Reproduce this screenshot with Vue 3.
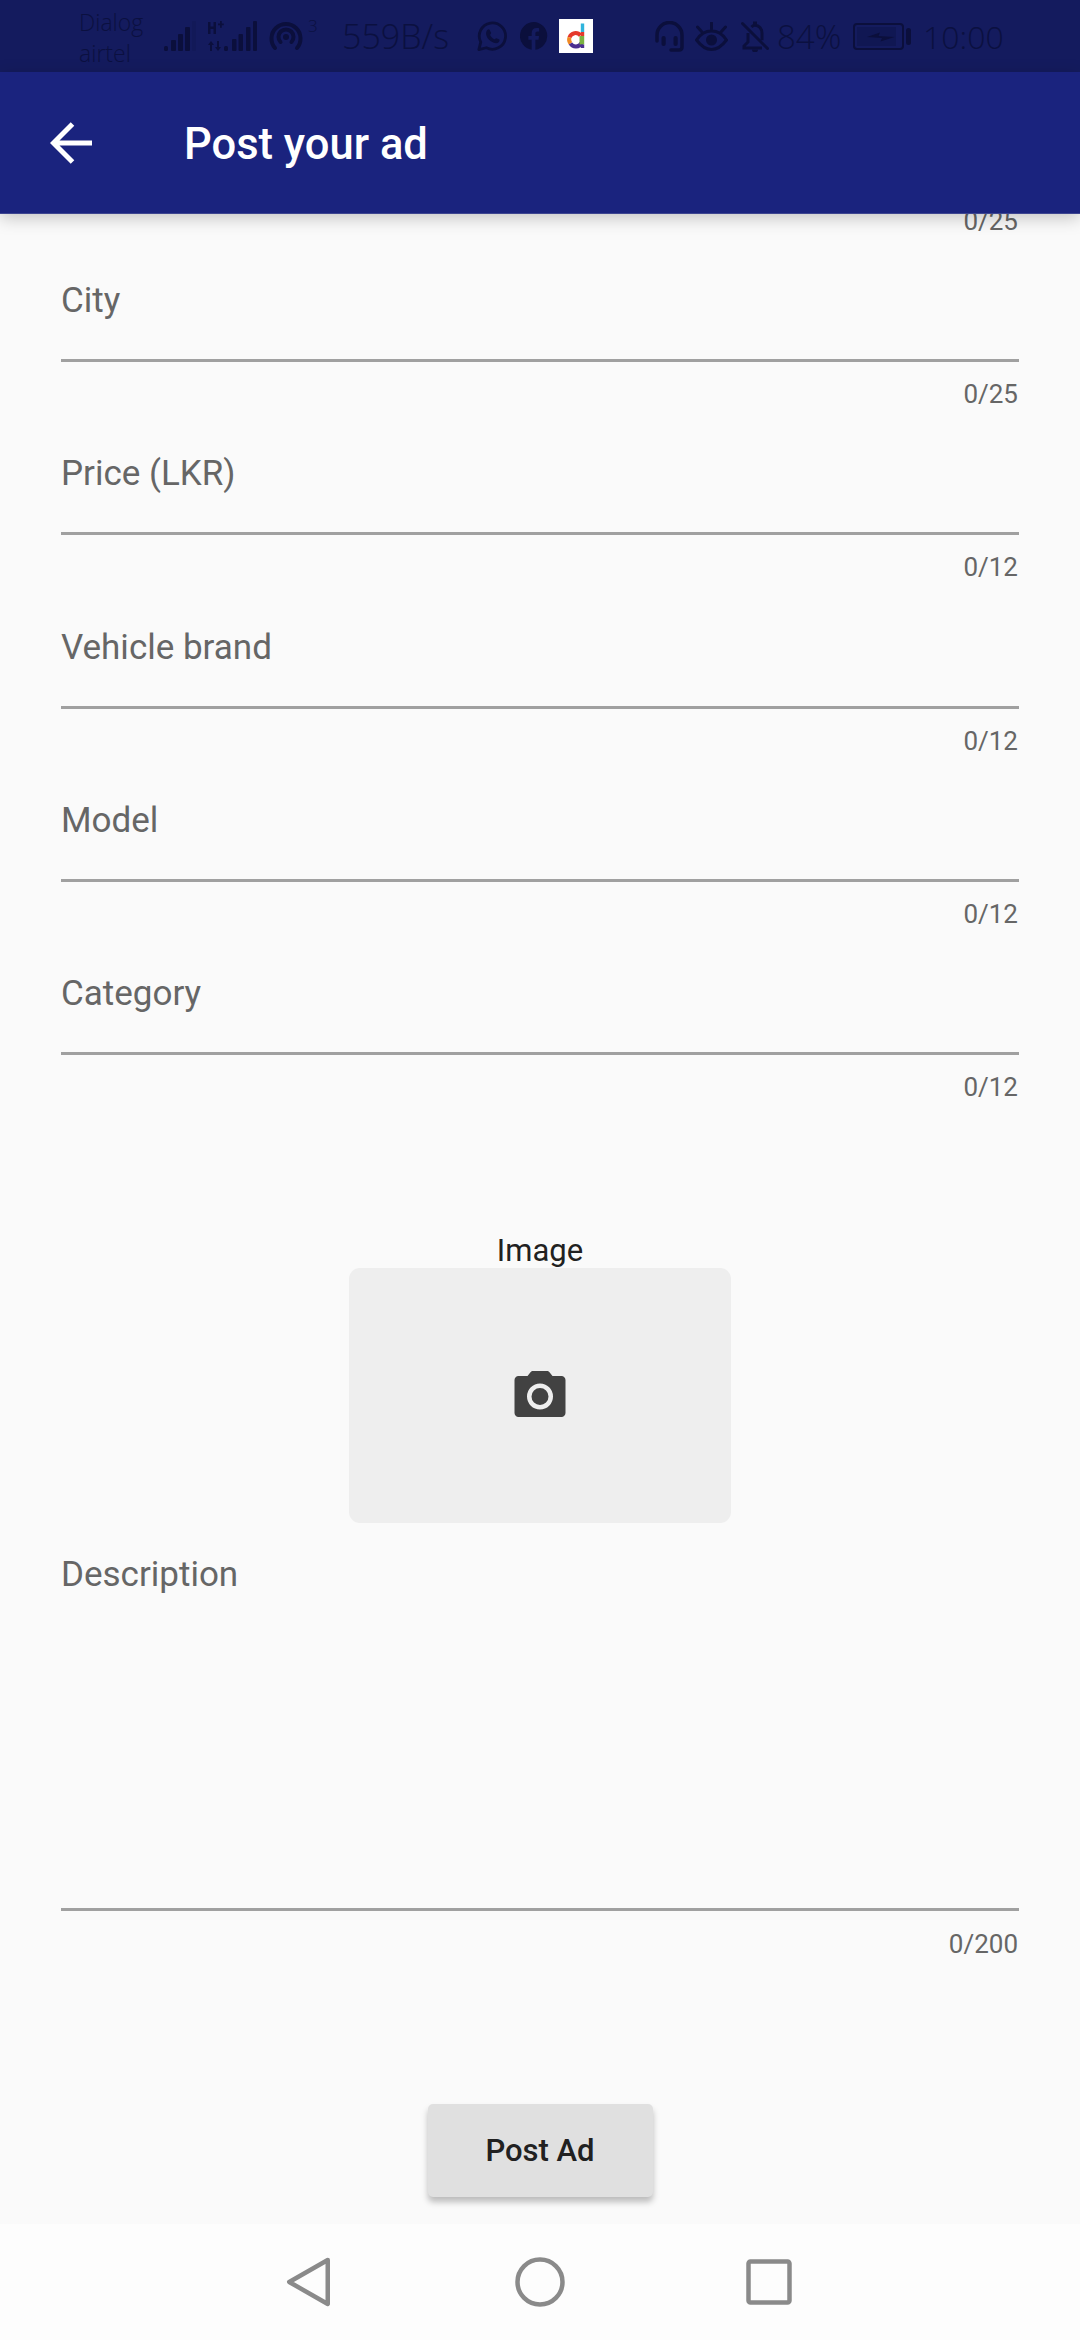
<script setup>
const fields = [
  { label: 'City', counter: '0/25' },
  { label: 'Price (LKR)', counter: '0/12' },
  { label: 'Vehicle brand', counter: '0/12' },
  { label: 'Model', counter: '0/12' },
  { label: 'Category', counter: '0/12' },
]
</script>

<template>
  <div class="screen">
    <div class="status">
      <div class="carrier"><span>Dialog</span><span>airtel</span></div>
      <svg class="ic signal" width="32" height="30" viewBox="0 0 32 30">
        <rect x="0" y="25" width="4" height="5" rx="1.500" /><rect x="7" y="19" width="5" height="11" rx="1" /><rect x="14" y="13" width="5" height="17" rx="1" /><rect x="21" y="6" width="5" height="24" rx="1" /><rect x="28" y="0" width="4" height="30" rx="1" opacity=".18" />
      </svg>
      <svg class="ic signal2" width="49" height="30" viewBox="0 0 49 30">
        <path d="M0 1h2.500v4.500h3V1H8v12H5.500V8h-3v5H0z" /><path d="M10 2.500h2V0h1.800v2.500h2v1.800h-2v2.500H12V4.300h-2z" />
        <path d="M0 24l3-4 3 4H4v6H2v-6z" /><path d="M7 26h2v-6h2v6h2l-3 4z" />
        <rect x="16" y="25" width="4" height="5" rx="1.500" /><rect x="24" y="18" width="4.500" height="12" rx="1" /><rect x="30.500" y="13" width="4.500" height="17" rx="1" /><rect x="38" y="6" width="4.500" height="24" rx="1" /><rect x="45" y="0" width="4" height="30" rx="1" />
      </svg>
      <svg class="ic hotspot" width="34" height="30" viewBox="0 0 34 30" fill="none">
        <path d="M6 27A14.500 14.500 0 1 1 28 27" stroke-width="4" stroke-linecap="round" />
        <path d="M11.500 21A7.500 7.500 0 1 1 22.500 21" stroke-width="4" stroke-linecap="round" />
        <circle cx="17" cy="16" r="3" class="fill" />
      </svg>
      <span class="hot-num">3</span>
      <span class="speed">559B/s</span>
      <svg class="ic wa" width="30" height="31" viewBox="0 0 32 32" fill="none">
        <path d="M2 30l2-8A14 14 0 1 1 10 28z" stroke-width="3" stroke-linejoin="round" />
        <path class="fill" d="M11 9c1-1 2-1 2.500 0l1.500 3c.3.700-1 2-1 2.500.8 2 2.500 3.500 4.500 4.500.6 0 1.600-1.500 2.300-1.200l3 1.500c.6.400.2 2.500-1 3.200-2 1.300-5 .5-8-1.500S10 16 9.700 13.500c-.2-2 .4-3.600 1.300-4.500z" />
      </svg>
      <svg class="ic fb" width="28" height="28" viewBox="0 0 30 30">
        <path d="M15 0a15 15 0 0 0-2.500 29.800V19H9v-4h3.500v-3c0-3.500 2-5.500 5.200-5.500 1.500 0 2.800.2 2.800.2v3.500h-1.700c-1.700 0-2.300 1-2.300 2.200V15h3.900l-.6 4h-3.300v10.800A15 15 0 0 0 15 0z" />
      </svg>
      <svg class="dice" width="34" height="34" viewBox="0 0 34 34" fill="none">
        <rect width="34" height="34" fill="#fff" />
        <path d="M21.500 16.500A6.300 6.300 0 0 0 10.500 18.500" stroke="#e5392b" stroke-width="4" />
        <path d="M10.500 18.500A6.300 6.300 0 0 0 11.500 24.500" stroke="#f08a24" stroke-width="4" />
        <path d="M11.500 24.500A6.300 6.300 0 0 0 22.500 24" stroke="#4b2f91" stroke-width="4" />
        <rect x="21.800" y="4.500" width="3.400" height="8.500" fill="#2fb4dc" />
        <rect x="21.800" y="13" width="3.400" height="4" fill="#e5392b" />
        <rect x="20.500" y="17" width="4.700" height="8.500" fill="#7cb342" />
        <rect x="21.800" y="25.500" width="3.400" height="3.500" fill="#4b2f91" />
      </svg>
      <svg class="ic head" width="29" height="31" viewBox="0 0 29 31" fill="none">
        <path d="M2 20V14a12.500 12.500 0 0 1 25 0v12q0 3-3 3h-8" stroke-width="3.500" stroke-linecap="round" />
        <rect class="fill" x="6.500" y="15" width="4.200" height="10" rx="2.100" /><rect class="fill" x="18.500" y="15" width="4.200" height="10" rx="2.100" />
      </svg>
      <svg class="ic eye" width="33" height="29" viewBox="0 0 33 29" fill="none">
        <path d="M1.500 18C6 11 11 9 16.500 9s10.500 2 15 9c-4.500 6-9.500 9.500-15 9.500S6 24 1.500 18z" stroke-width="3" />
        <circle class="fill" cx="16.500" cy="18" r="5.500" />
        <path d="M2.500 5l4.500 5M16.500 1v6M30.500 5L26 10" stroke-width="3" stroke-linecap="round" />
      </svg>
      <svg class="ic bell" width="28" height="31" viewBox="0 0 28 31" fill="none">
        <path d="M7 12v9l-4 4v2h18M10.500 6c1-1 2.300-1.800 3.500-1.800 4 0 7 3.500 7 8v7" stroke-width="3" />
        <path class="fill" d="M12 .500h4v4h-4zM11 28.500h6a3 3 0 0 1-6 0z" />
        <path d="M1.500 2.500l25 25" stroke-width="3" stroke-linecap="round" />
      </svg>
      <span class="pct">84%</span>
      <svg class="ic batt" width="58" height="27" viewBox="0 0 58 27" fill="none">
        <rect x="1" y="1" width="49" height="25" rx="3" stroke-width="2" />
        <rect class="fill" x="4" y="4" width="39" height="19" opacity=".3" />
        <path class="fill" d="M14 14l13-4.500-1.500 3.500 16 1-14 4.500 1.500-3.500z" />
        <rect class="fill" x="53" y="5" width="5" height="17" rx="2.500" />
      </svg>
      <span class="time">10:00</span>
    </div>

    <header class="appbar">
      <svg class="back" width="44" height="44" viewBox="0 0 44 44" fill="none">
        <path d="M3 22H42M22.500 3L3.500 22l19 19" stroke="#fff" stroke-width="5" />
      </svg>
      <h1>Post your ad</h1>
    </header>

    <main class="body">
      <div class="clip-counter"><span>0/25</span></div>
      <div v-for="f in fields" :key="f.label" class="field">
        <div class="label">{{ f.label }}</div>
        <div class="line"></div>
        <div class="counter">{{ f.counter }}</div>
      </div>

      <div class="image-block">
        <div class="image-label">Image</div>
        <div class="image-box">
          <svg class="camera" width="52" height="46" viewBox="0 0 51 46">
            <path fill="#424242" fill-rule="evenodd" d="M13 5l3-3.700C16.700.5 17.500 0 18.500 0h14c1 0 1.800.5 2.500 1.300L38 5h9c2.200 0 4 1.800 4 4v33c0 2.200-1.800 4-4 4H4c-2.200 0-4-1.800-4-4V9c0-2.200 1.800-4 4-4zM25.500 12.500a13 13 0 1 0 0 26 13 13 0 0 0 0-26zM25.500 17a8.500 8.500 0 1 1 0 17 8.500 8.500 0 0 1 0-17z" />
          </svg>
        </div>
      </div>

      <div class="description">
        <div class="label">Description</div>
        <div class="line"></div>
        <div class="counter">0/200</div>
      </div>

      <div class="actions">
        <button class="post">Post Ad</button>
      </div>
    </main>

    <nav class="navbar">
      <svg class="nav-back" width="48" height="52" viewBox="0 0 48 52" fill="none">
        <path d="M42.750 4L4.250 26l38.500 22z" stroke="#8a8a8a" stroke-width="4.500" stroke-linejoin="round" />
      </svg>
      <svg class="nav-home" width="50" height="52" viewBox="0 0 50 52" fill="none">
        <circle cx="25" cy="26" r="22.500" stroke="#8a8a8a" stroke-width="4.500" />
      </svg>
      <svg class="nav-recent" width="46" height="46" viewBox="0 0 46 46" fill="none">
        <rect x="2.500" y="2.500" width="41" height="41" rx="2" stroke="#8a8a8a" stroke-width="4.500" />
      </svg>
    </nav>
  </div>
</template>

<style scoped>
.screen {
  width: 1080px;
  height: 2340px;
  display: flex;
  flex-direction: column;
  background: #fafafa;
  font-family: Roboto, sans-serif;
  overflow: hidden;
}
.status {
  height: 72px;
  flex: none;
  background: #141b5e;
  display: flex;
  align-items: center;
  padding-left: 79px;
  color: #0b1040;
  font-family: "Open Sans", sans-serif;
  font-weight: 300;
}
.ic { stroke: #0b0f3c; fill: none; flex: none; }
.ic.signal, .ic.signal2, .ic.fb { fill: #0b0f3c; stroke: none; }
.ic .fill { fill: #0b0f3c; stroke: none; }
.carrier {
  display: flex;
  flex-direction: column;
  font-size: 23px;
  line-height: 31px;
  width: 85px;
  flex: none;
  margin-top: 4px;
}
.signal2 { margin-left: 12px; }
.hotspot { margin-left: 12px; }
.hot-num { font-size: 17px; margin-left: 5px; margin-top: -21px; width: 9px; flex: none; line-height: 20px; }
.speed { font-size: 34px; margin-left: 25px; width: 106px; flex: none; white-space: nowrap; }
.wa { margin-left: 29px; }
.fb { margin-left: 13px; }
.dice { margin-left: 11px; flex: none; }
.head { margin-left: 62px; }
.eye { margin-left: 11px; }
.bell { margin-left: 13px; }
.pct { font-size: 33px; margin-left: 8px; width: 66px; flex: none; white-space: nowrap; }
.batt { margin-left: 10px; }
.time { font-size: 32px; margin-left: 12px; white-space: nowrap; }

.appbar {
  height: 142px;
  flex: none;
  background: #1a237e;
  display: flex;
  align-items: center;
  padding-left: 50px;
  box-shadow: 0 4px 16px rgba(0, 0, 0, .22);
  position: relative;
  z-index: 2;
  border-bottom: 1px solid #3d4590;
  box-sizing: border-box;
}
.back { flex: none; margin-top: 1px; }
.appbar h1 {
  margin: 3px 0 0 90px;
  color: #fff;
  font-size: 43.500px;
  font-weight: 500;
}
.body {
  flex: 1;
  display: flex;
  flex-direction: column;
  overflow: hidden;
  padding: 0 61px;
  min-height: 0;
}
.clip-counter {
  height: 22px;
  padding-right: 1px;
  overflow: hidden;
  display: flex;
  justify-content: flex-end;
  align-items: flex-end;
  font-size: 26px;
  color: #666;
  line-height: 30px;
  flex: none;
}
.field { height: 173.250px; flex: none; display: flex; flex-direction: column; }
.label {
  font-size: 35px;
  line-height: 44px;
  color: #666;
  margin-top: 43px;
}
.line { height: 3px; background: #a0a0a0; margin-top: 36px; flex: none; }
.counter {
  font-size: 26px;
  color: #666;
  text-align: right;
  line-height: 30px;
  margin-top: 17px;
  padding-right: 1px;
}
.image-block {
  flex: none;
  display: flex;
  flex-direction: column;
  align-items: center;
  margin-top: -1px;
}
.image-label { font-size: 31px; line-height: 32px; color: #212121; margin-top: 134px; }
.image-box {
  width: 382px;
  height: 255px;
  margin-top: 1px;
  background: #eeeeee;
  border-radius: 11px;
  display: flex;
  align-items: center;
  justify-content: center;
}
.camera { margin-bottom: 3px; }
.description { flex: none; display: flex; flex-direction: column; }
.description .label { margin-top: 30px; }
.description .line { margin-top: 311px; }
.description .counter { margin-top: 18px; }
.actions { flex: none; display: flex; justify-content: center; margin-top: 145px; }
.post {
  width: 225px;
  height: 93px;
  border: 0;
  border-radius: 5px;
  background: #e0e0e0;
  color: #212121;
  font-family: Roboto, sans-serif;
  font-size: 31px;
  font-weight: 500;
  box-shadow: 0 5px 6px rgba(0, 0, 0, .25);
  padding: 0;
}
.navbar {
  height: 116px;
  flex: none;
  background: #fdfdfd;
  display: flex;
  align-items: center;
  padding-left: 285px;
}
.nav-home { margin-left: 182px; }
.nav-recent { margin-left: 181px; }
</style>
